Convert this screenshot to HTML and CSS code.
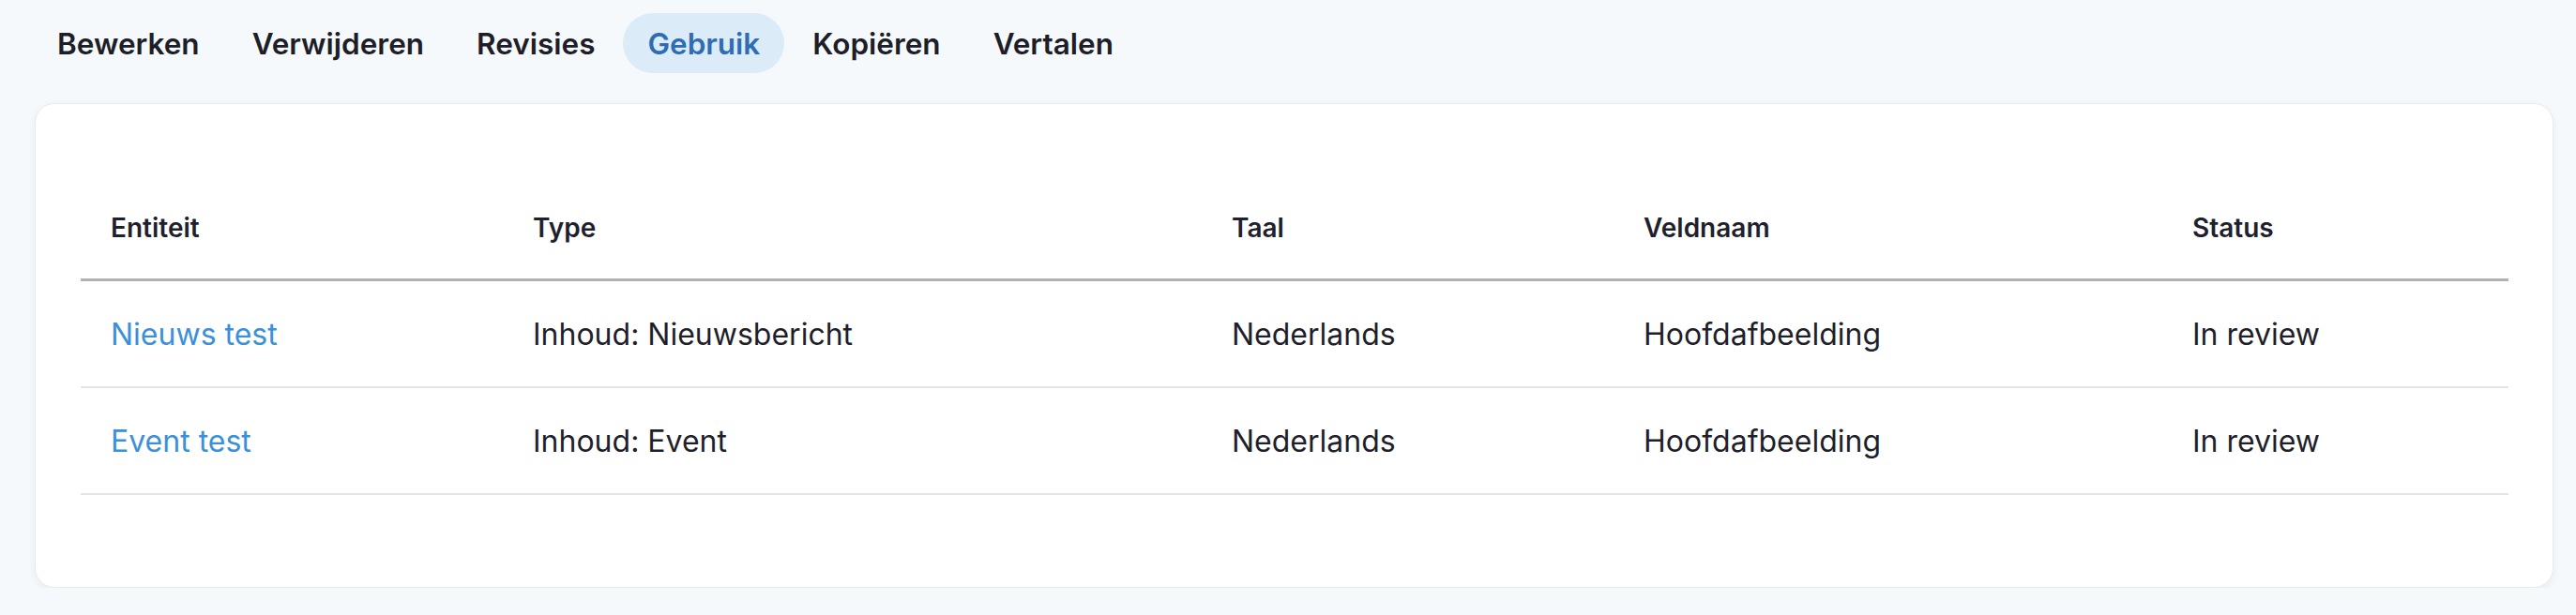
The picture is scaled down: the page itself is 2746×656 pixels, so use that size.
FILE: index.html
```html
<!DOCTYPE html>
<html lang="nl">
<head>
<meta charset="utf-8">
<title>Gebruik</title>
<link rel="stylesheet" href="styles.css">
</head>
<body>
<div class="page">
  <nav class="tabs">
    <a class="tab">Bewerken</a>
    <a class="tab">Verwijderen</a>
    <a class="tab">Revisies</a>
    <a class="tab active">Gebruik</a>
    <a class="tab">Kopiëren</a>
    <a class="tab">Vertalen</a>
  </nav>
  <section class="card">
    <table class="usage">
      <colgroup>
        <col class="c1"><col class="c2"><col class="c3"><col class="c4"><col class="c5">
      </colgroup>
      <thead>
        <tr><th>Entiteit</th><th>Type</th><th>Taal</th><th>Veldnaam</th><th>Status</th></tr>
      </thead>
      <tbody>
        <tr><td><a class="link">Nieuws test</a></td><td>Inhoud: Nieuwsbericht</td><td>Nederlands</td><td>Hoofdafbeelding</td><td>In review</td></tr>
        <tr><td><a class="link">Event test</a></td><td>Inhoud: Event</td><td>Nederlands</td><td>Hoofdafbeelding</td><td>In review</td></tr>
      </tbody>
    </table>
  </section>
</div>
</body>
</html>
```
FILE: styles.css
```css
* { box-sizing: border-box; }
html, body { margin: 0; padding: 0; }
body {
  background: #f5f9fc;
  font-family: Inter, "Noto Sans", sans-serif;
  color: #1f1f2b;
}
.page {
  padding: 14px 24px 0 37px;
}
.tabs {
  display: flex;
  gap: 4px;
  height: 64px;
  align-items: center;
  margin-left: -2px;
}
.tab {
  display: flex;
  align-items: center;
  height: 64px;
  padding: 0 26px;
  border-radius: 32px;
  font-size: 31.5px;
  font-weight: 600;
  color: #1e1e28;
  text-decoration: none;
}
.tab.active {
  background: #dcebf8;
  color: #2e6db2;
}
.card {
  margin-top: 32px;
  background: #fff;
  border: 1px solid #e8ebef;
  border-radius: 21px;
  box-shadow: 0 3px 10px rgba(30, 40, 60, 0.06);
  padding: 78px 47px 98px 48px;
}
.usage {
  width: 100%;
  border-collapse: collapse;
  table-layout: fixed;
}
.c1 { width: 450px; }
.c2 { width: 745px; }
.c3 { width: 439px; }
.c4 { width: 585px; }
.c5 { width: auto; }
.usage th {
  text-align: left;
  font-size: 28px;
  font-weight: 600;
  line-height: 42px;
  padding: 33px 32px;
  color: #1f1f2e;
  border-bottom: 3px solid #b1b1b1;
}
.usage td {
  font-size: 32px;
  font-weight: 400;
  line-height: 47px;
  padding: 33px 32px 32px;
  border-bottom: 2px solid #e3e4e6;
  white-space: nowrap;
}
.link {
  color: #3b90da;
  text-decoration: none;
}
```
